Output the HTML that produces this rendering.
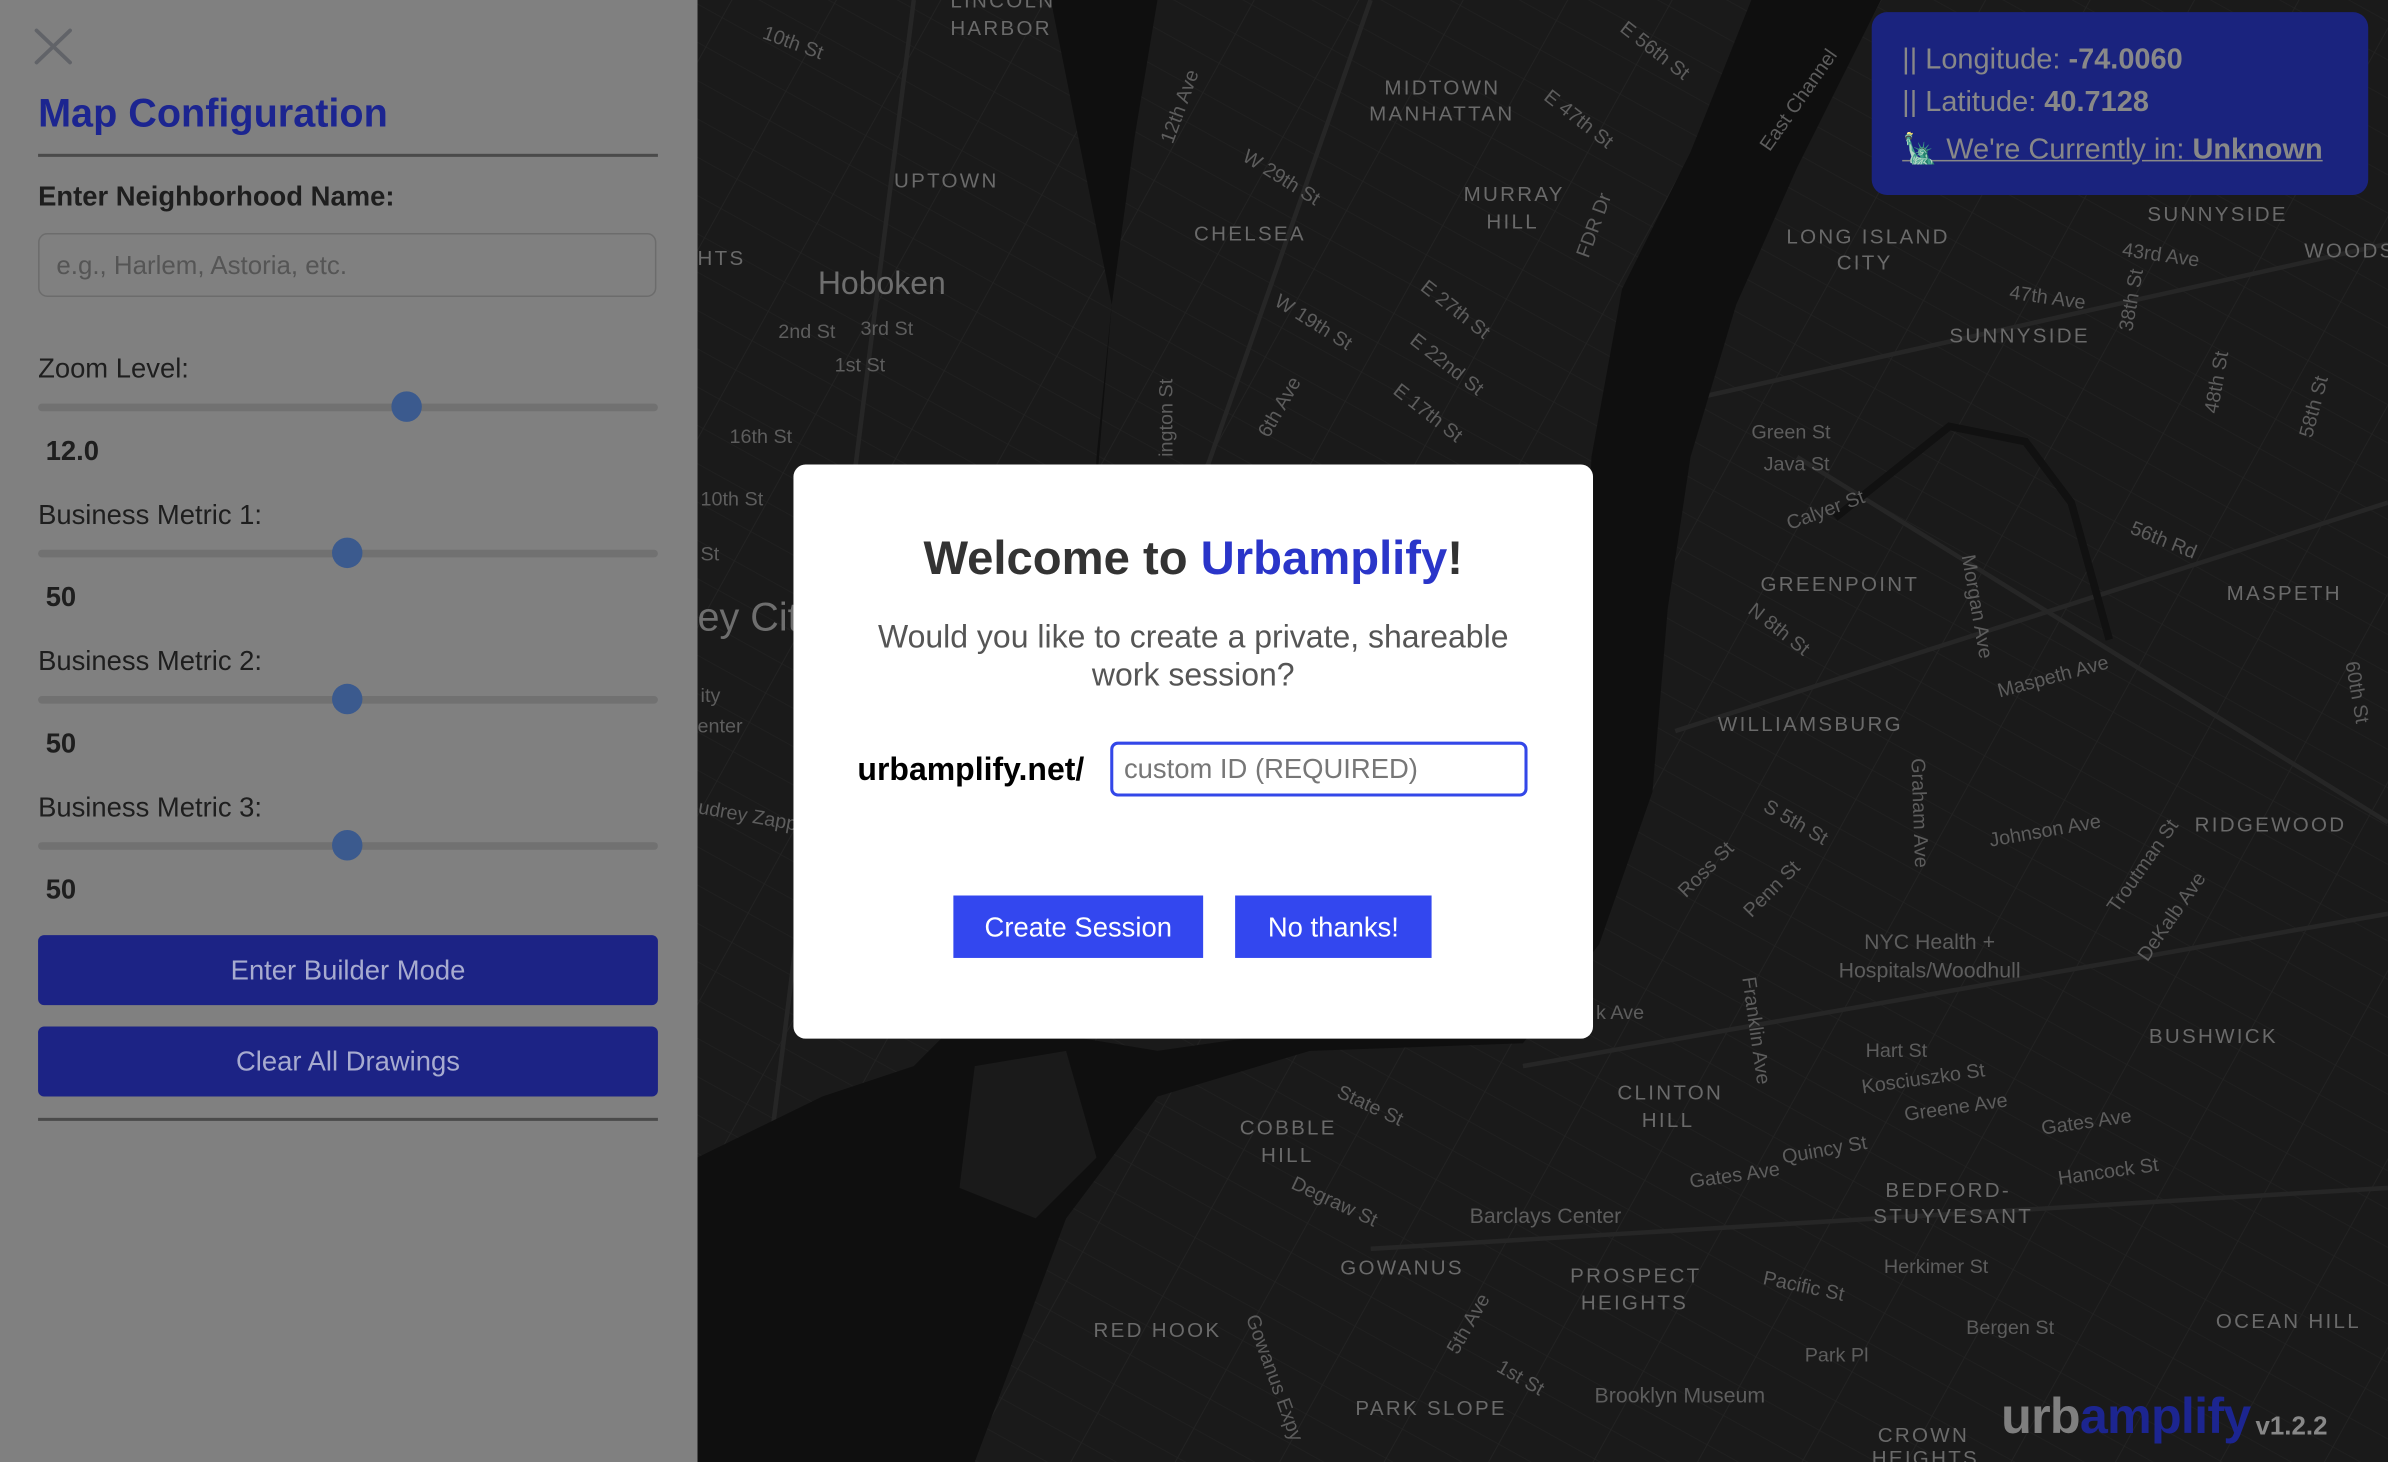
<!DOCTYPE html>
<html><head><meta charset="utf-8"><style>
html,body{margin:0;padding:0;width:2388px;height:1462px;overflow:hidden;background:#191919;}
#w{position:absolute;left:0;top:0;width:1568px;height:960px;transform:scale(1.52296);transform-origin:0 0;font-family:"Liberation Sans",sans-serif;}
.a{position:absolute;}
#side{left:0;top:0;width:458px;height:960px;background:#808080;}
.lbl{position:absolute;left:25px;font-size:18px;color:#1e1e1e;}
.track{position:absolute;left:25px;width:407px;height:5px;background:#717171;border-radius:3px;}
.thumb{position:absolute;width:20px;height:20px;border-radius:50%;background:#3b5a8e;}
.val{position:absolute;left:30px;font-size:18px;font-weight:bold;color:#1e1e1e;}
.btn{position:absolute;left:25px;width:407px;height:46px;background:#1c2385;border-radius:4px;color:#a7abcf;font-size:18px;text-align:center;line-height:46px;}
</style></head><body><div id="w">
<svg class="a" style="left:0;top:0" width="1568" height="960" viewBox="0 0 1568 960">
<defs>
<pattern id="p1" width="22" height="22" patternUnits="userSpaceOnUse" patternTransform="rotate(29)"><line x1="0" y1="0" x2="22" y2="0" stroke="#212121" stroke-width="1"/></pattern>
<pattern id="p2" width="60" height="60" patternUnits="userSpaceOnUse" patternTransform="rotate(-61)"><line x1="0" y1="0" x2="60" y2="0" stroke="#232323" stroke-width="1.2"/></pattern>
</defs>
<rect x="458" y="0" width="1110" height="960" fill="#1a1a1a"/>
<rect x="458" y="0" width="1110" height="960" fill="url(#p1)"/>
<rect x="458" y="0" width="1110" height="960" fill="url(#p2)"/>
<g stroke="#262626" stroke-width="3" fill="none">
<path d="M1120 260 L1568 160"/><path d="M1100 480 L1568 330"/><path d="M1000 700 L1568 600"/><path d="M900 820 L1568 780"/><path d="M1180 300 L1568 540"/><path d="M600 0 L480 960"/><path d="M900 0 L760 400"/>
</g>
<g fill="#0f0f0f">
<path d="M690 0 L760 0 L745 90 L730 200 L720 320 L705 420 L690 520 L680 620 L600 700 L540 720 L458 760 L458 960 L640 960 L700 800 L760 720 L860 690 L1000 685 L1050 620 L1085 520 L1095 400 L1110 300 L1140 200 L1180 110 L1235 0 L1150 0 L1110 100 L1065 190 L1045 300 L1040 420 L1000 610 L900 670 L760 690 L700 680 L705 560 L715 420 L720 300 L730 200 Z"/>
</g>
<path d="M1205 340 L1280 280 L1330 290 L1360 330 L1385 420" stroke="#111" stroke-width="5" fill="none"/>
<path d="M640 700 L700 690 L720 760 L680 800 L630 780 Z" fill="#1a1a1a"/>
<g font-family="Liberation Sans, sans-serif" font-size="13" fill="#5d5d5d">
<g fill="#6a6a6a" letter-spacing="1.5" font-size="13.5">
<text x="624" y="5">LINCOLN</text><text x="624" y="23">HARBOR</text>
<text x="909" y="62">MIDTOWN</text><text x="899" y="79">MANHATTAN</text>
<text x="587" y="123">UPTOWN</text><text x="784" y="158">CHELSEA</text>
<text x="961" y="132">MURRAY</text><text x="976" y="150">HILL</text>
<text x="1173" y="160">LONG ISLAND</text><text x="1206" y="177">CITY</text>
<text x="1410" y="145">SUNNYSIDE</text><text x="1513" y="169">WOODS</text><text x="1280" y="225">SUNNYSIDE</text>
<text x="1156" y="388">GREENPOINT</text><text x="1462" y="394">MASPETH</text>
<text x="1128" y="480">WILLIAMSBURG</text><text x="1441" y="546">RIDGEWOOD</text>
<text x="1411" y="685">BUSHWICK</text>
<text x="1062" y="722">CLINTON</text><text x="1078" y="740">HILL</text>
<text x="814" y="745">COBBLE</text><text x="828" y="763">HILL</text>
<text x="880" y="837">GOWANUS</text>
<text x="1031" y="842">PROSPECT</text><text x="1038" y="860">HEIGHTS</text>
<text x="1238" y="786">BEDFORD-</text><text x="1230" y="803">STUYVESANT</text>
<text x="718" y="878">RED HOOK</text><text x="890" y="929">PARK SLOPE</text>
<text x="1455" y="872">OCEAN HILL</text><text x="1233" y="947">CROWN</text><text x="1229" y="962">HEIGHTS</text>
<text x="458" y="174">HTS</text>
</g>
<text x="537" y="193" font-size="21" fill="#6e6e6e">Hoboken</text>
<text x="458" y="414" font-size="26" fill="#6e6e6e">ey Cit</text>
<text x="965" y="803" font-size="14">Barclays Center</text>
<text x="1047" y="921" font-size="14">Brooklyn Museum</text>
<text x="1267" y="623" font-size="14" text-anchor="middle">NYC Health +</text>
<text x="1267" y="642" font-size="14" text-anchor="middle">Hospitals/Woodhull</text>
<text x="511" y="222">2nd St</text><text x="565" y="220">3rd St</text><text x="548" y="244">1st St</text>
<text x="479" y="291">16th St</text><text x="460" y="332">10th St</text><text x="460" y="368">St</text>
<text x="460" y="461">ity</text><text x="458" y="481">enter</text>
<text x="458" y="534" transform="rotate(10 458 534)">udrey Zapp</text>
<text x="500" y="25" transform="rotate(20 500 25)">10th St</text>
<text x="1150" y="288">Green St</text><text x="1158" y="309">Java St</text>
<text x="1175" y="348" transform="rotate(-20 1175 348)">Calyer St</text>
<text x="1393" y="168" transform="rotate(8 1393 168)">43rd Ave</text>
<text x="1319" y="196" transform="rotate(8 1319 196)">47th Ave</text>
<text x="1398" y="350" transform="rotate(22 1398 350)">56th Rd</text>
<text x="1313" y="458" transform="rotate(-15 1313 458)">Maspeth Ave</text>
<text x="1307" y="556" transform="rotate(-10 1307 556)">Johnson Ave</text>
<text x="1225" y="694">Hart St</text><text x="1223" y="718" transform="rotate(-8 1223 718)">Kosciuszko St</text>
<text x="1251" y="736" transform="rotate(-8 1251 736)">Greene Ave</text><text x="1341" y="745" transform="rotate(-8 1341 745)">Gates Ave</text>
<text x="1352" y="778" transform="rotate(-8 1352 778)">Hancock St</text><text x="1171" y="764" transform="rotate(-10 1171 764)">Quincy St</text>
<text x="1110" y="780" transform="rotate(-8 1110 780)">Gates Ave</text><text x="1157" y="843" transform="rotate(12 1157 843)">Pacific St</text>
<text x="1237" y="836">Herkimer St</text><text x="1291" y="876">Bergen St</text><text x="1185" y="894">Park Pl</text>
<text x="1063" y="20" transform="rotate(38 1063 20)">E 56th St</text>
<text x="1013" y="65" transform="rotate(38 1013 65)">E 47th St</text>
<text x="815" y="105" transform="rotate(32 815 105)">W 29th St</text>
<text x="932" y="190" transform="rotate(38 932 190)">E 27th St</text>
<text x="836" y="200" transform="rotate(32 836 200)">W 19th St</text>
<text x="925" y="225" transform="rotate(38 925 225)">E 22nd St</text>
<text x="914" y="258" transform="rotate(38 914 258)">E 17th St</text>
<text x="770" y="95" transform="rotate(-70 770 95)">12th Ave</text>
<text x="1043" y="170" transform="rotate(-70 1043 170)">FDR Dr</text>
<text x="1162" y="100" transform="rotate(-55 1162 100)">East Channel</text>
<text x="833" y="288" transform="rotate(-60 833 288)">6th Ave</text>
<text x="770" y="300" transform="rotate(-90 770 300)">ington St</text>
<text x="1147" y="402" transform="rotate(38 1147 402)">N 8th St</text>
<text x="1157" y="532" transform="rotate(30 1157 532)">S 5th St</text>
<text x="1107" y="590" transform="rotate(-45 1107 590)">Ross St</text>
<text x="1150" y="603" transform="rotate(-45 1150 603)">Penn St</text>
<text x="1288" y="365" transform="rotate(80 1288 365)">Morgan Ave</text>
<text x="1255" y="498" transform="rotate(88 1255 498)">Graham Ave</text>
<text x="1144" y="642" transform="rotate(82 1144 642)">Franklin Ave</text>
<text x="877" y="720" transform="rotate(25 877 720)">State St</text>
<text x="847" y="780" transform="rotate(25 847 780)">Degraw St</text>
<text x="1048" y="669">k Ave</text>
<text x="1390" y="600" transform="rotate(-55 1390 600)">Troutman St</text>
<text x="1410" y="632" transform="rotate(-55 1410 632)">DeKalb Ave</text>
<text x="1400" y="218" transform="rotate(-80 1400 218)">38th St</text>
<text x="1456" y="272" transform="rotate(-80 1456 272)">48th St</text>
<text x="1518" y="288" transform="rotate(-75 1518 288)">58th St</text>
<text x="1540" y="435" transform="rotate(80 1540 435)">60th St</text>
<text x="818" y="865" transform="rotate(70 818 865)">Gowanus Expy</text>
<text x="957" y="890" transform="rotate(-60 957 890)">5th Ave</text>
<text x="982" y="900" transform="rotate(30 982 900)">1st St</text>
</g>
</svg>

<div class="a" id="side">
<svg class="a" style="left:22px;top:18px" width="28" height="26"><path d="M2 2 L24 23 M24 2 L2 23" stroke="#616368" stroke-width="2.5" stroke-linecap="round"/></svg>
<div class="a" style="left:25px;top:59px;font-size:26px;font-weight:bold;color:#1c2590;">Map Configuration</div>
<div class="a" style="left:25px;top:101px;width:407px;height:2px;background:#4a4a4a;"></div>
<div class="lbl" style="top:119px;font-weight:bold;">Enter Neighborhood Name:</div>
<div class="a" style="left:25px;top:153px;width:404px;height:40px;border:1.5px solid #6c6c6c;border-radius:6px;"></div>
<div class="a" style="left:37px;top:165px;font-size:17px;color:#555;">e.g., Harlem, Astoria, etc.</div>
<div class="lbl" style="top:232px;">Zoom Level:</div>
<div class="track" style="top:265px;"></div><div class="thumb" style="left:257px;top:257px;"></div>
<div class="val" style="top:286px;">12.0</div>
<div class="lbl" style="top:328px;">Business Metric 1:</div>
<div class="track" style="top:361px;"></div><div class="thumb" style="left:218px;top:353px;"></div>
<div class="val" style="top:382px;">50</div>
<div class="lbl" style="top:424px;">Business Metric 2:</div>
<div class="track" style="top:457px;"></div><div class="thumb" style="left:218px;top:449px;"></div>
<div class="val" style="top:478px;">50</div>
<div class="lbl" style="top:520px;">Business Metric 3:</div>
<div class="track" style="top:553px;"></div><div class="thumb" style="left:218px;top:545px;"></div>
<div class="val" style="top:574px;">50</div>
<div class="btn" style="top:614px;">Enter Builder Mode</div>
<div class="btn" style="top:674px;">Clear All Drawings</div>
<div class="a" style="left:25px;top:734px;width:407px;height:2px;background:#4a4a4a;"></div>
</div>

<div class="a" style="left:1229px;top:8px;width:326px;height:120px;background:#1a237e;border-radius:10px;color:#888;font-size:19px;">
<div class="a" style="left:20px;top:21px;white-space:nowrap;">|| Longitude: <b>-74.0060</b></div>
<div class="a" style="left:20px;top:49px;white-space:nowrap;">|| Latitude: <b>40.7128</b></div>
<div class="a" style="left:20px;top:78px;white-space:nowrap;text-decoration:underline;">🗽 We're Currently in: <b>Unknown</b></div>
</div>

<div class="a" style="left:521px;top:305px;width:525px;height:377px;background:#fff;border-radius:8px;">
<div class="a" style="left:0;top:44px;width:525px;text-align:center;font-size:31px;font-weight:bold;color:#333;">Welcome to <span style="color:#2a35c9">Urbamplify</span>!</div>
<div class="a" style="left:0;top:101px;width:525px;text-align:center;font-size:21px;line-height:25px;color:#555;">Would you like to create a private, shareable<br>work session?</div>
<div class="a" style="left:42px;top:189px;font-size:21px;font-weight:bold;color:#000;">urbamplify.net/</div>
<div class="a" style="left:208px;top:182px;width:270px;height:32px;border:2px solid #3347e8;border-radius:5px;"></div>
<div class="a" style="left:217px;top:190px;font-size:18px;color:#777;">custom ID (REQUIRED)</div>
<div class="a" style="left:105px;top:283px;width:164px;height:41px;background:#3347ef;color:#fff;font-size:18px;line-height:42px;text-align:center;">Create Session</div>
<div class="a" style="left:290px;top:283px;width:129px;height:41px;background:#3347ef;color:#fff;font-size:18px;line-height:42px;text-align:center;">No thanks!</div>
</div>

<div class="a" style="left:1314px;top:911px;font-size:33px;font-weight:bold;letter-spacing:-0.5px;white-space:nowrap;"><span style="color:#7f7f7f">urb</span><span style="color:#1c2590">amplify</span></div>
<div class="a" style="left:1481px;top:927px;font-size:17px;font-weight:bold;color:#888;">v1.2.2</div>
</div></body></html>
